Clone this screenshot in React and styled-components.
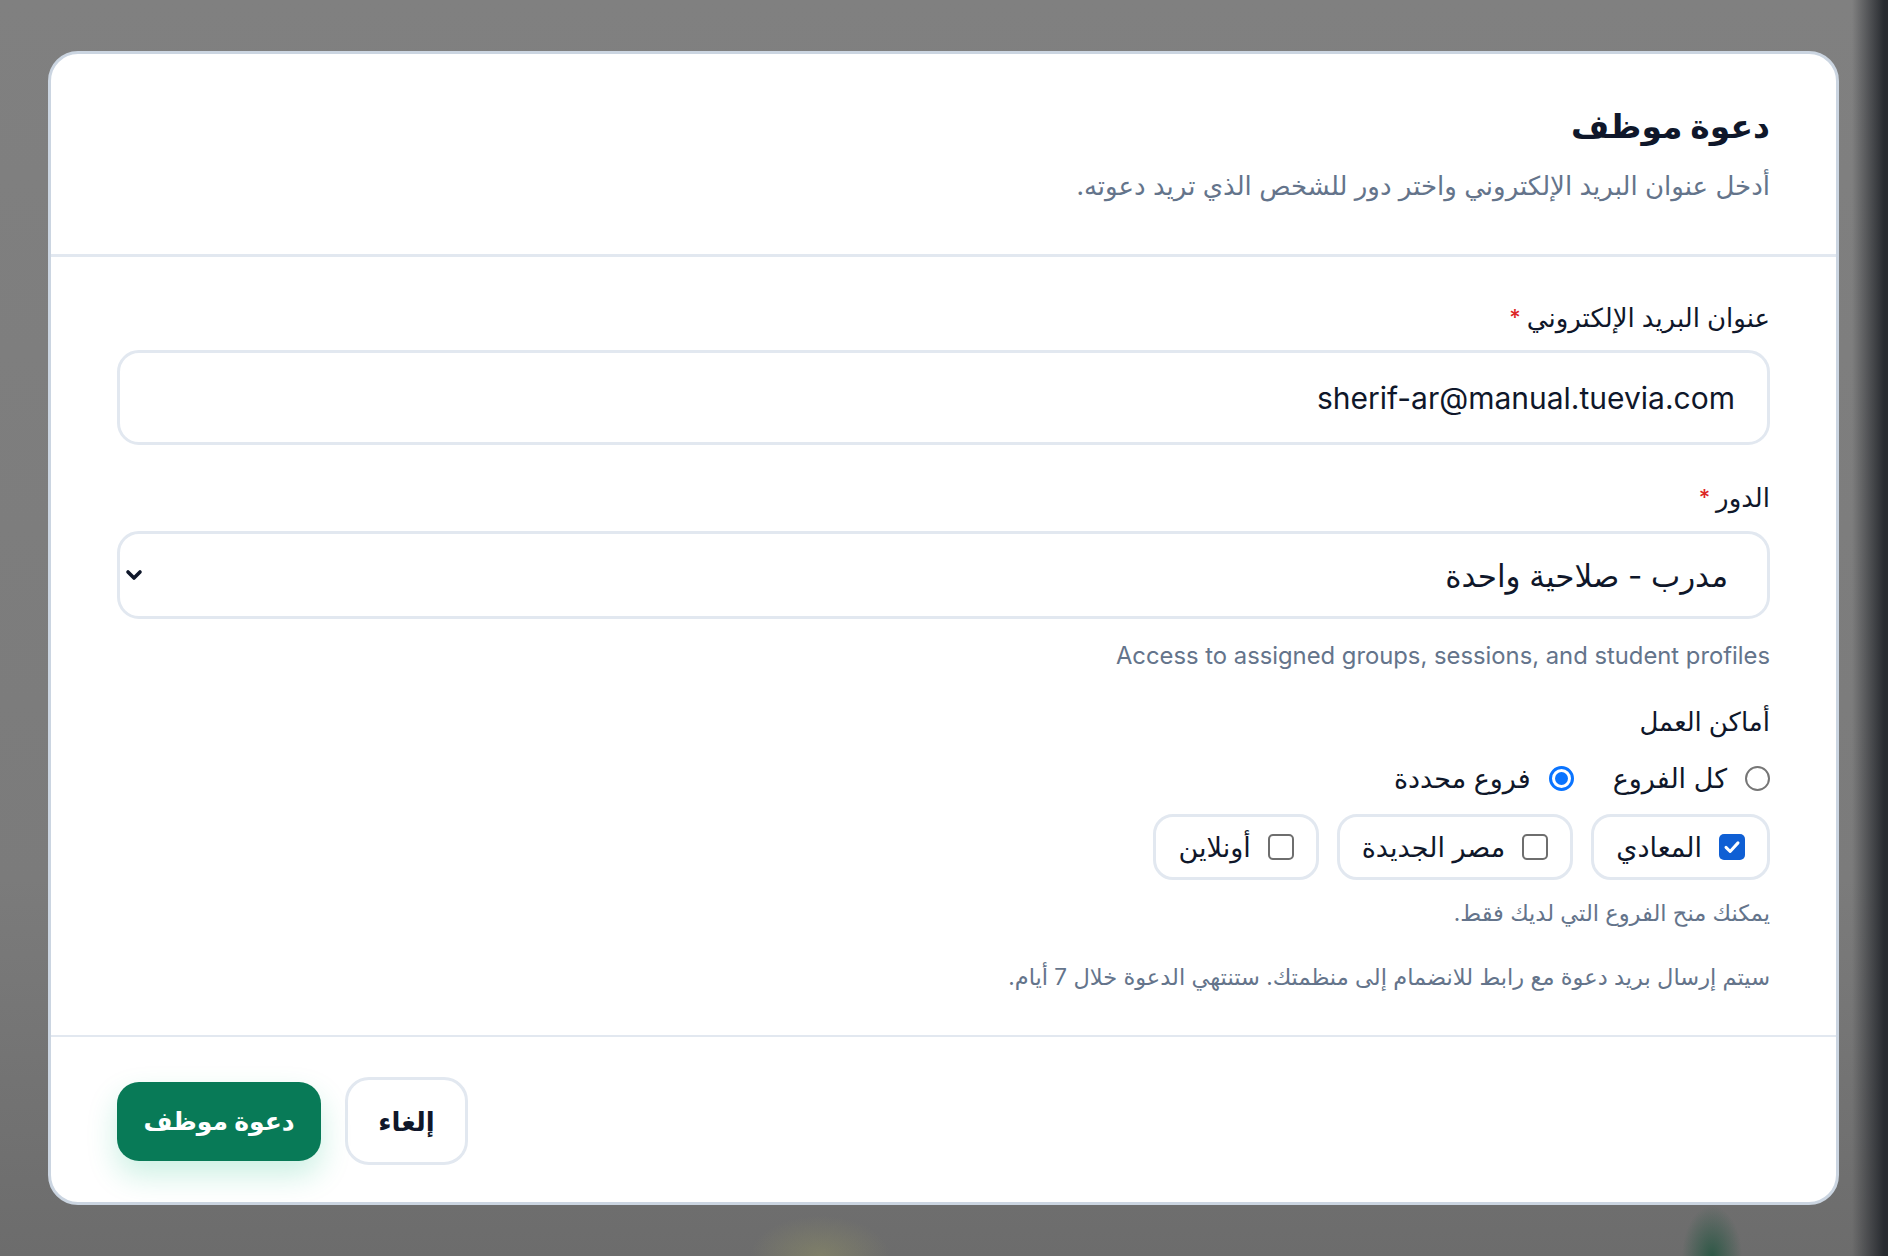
import React, { useState } from "react";
import styled, { createGlobalStyle } from "styled-components";
import { ChevronDown } from "lucide-react";

const GlobalStyle = createGlobalStyle`
html, body {
    margin: 0;
    padding: 0;
}
body {
    font-family: Inter, "Noto Sans", "DejaVu Sans", sans-serif;
    background: #7c7c7c;
}
* {
    box-sizing: border-box;
}
`;

const Backdrop = styled.div`
min-height: 1256px;
padding: 51px 0 0 48px;
background:
    linear-gradient(to right, rgba(40, 43, 48, 0) 1852px, rgba(40, 43, 48, 1) 1884px),
    radial-gradient(ellipse 70px 40px at 820px 1256px, rgba(150, 150, 100, 0.45), rgba(150, 150, 100, 0)),
    radial-gradient(ellipse 30px 50px at 1712px 1256px, rgba(20, 80, 55, 0.7), rgba(20, 80, 55, 0)),
    linear-gradient(to bottom, #808080 0%, #7b7b7b 70%, #6c6c6c 100%);
`;

const Modal = styled.div`
direction: rtl;
width: 1791px;
height: 1154px;
background: #ffffff;
border: 3px solid #cbd5e1;
border-radius: 30px;
display: flex;
flex-direction: column;
`;

const Header = styled.div`
padding: 47px 66px 50px;
border-bottom: 3px solid #e2e8f0;
`;

const Title = styled.h2`
margin: 0;
font-size: 33px;
line-height: 50px;
font-weight: 700;
color: #0f172a;
`;

const Subtitle = styled.p`
margin: 17px 0 0;
font-size: 26px;
line-height: 36px;
color: #64748b;
`;

const Body = styled.div`
flex: 1;
padding: 41px 66px 0;
display: flex;
flex-direction: column;
`;

const Label = styled.label`
display: block;
margin-top: ${props => props.$top || 0}px;
font-size: 26px;
line-height: 39px;
font-weight: 500;
color: #0f172a;
`;

const Required = styled.span`
color: #dc2626;
margin-right: 6px;
font-size: 22px;
vertical-align: top;
`;

const TextInput = styled.input`
margin-top: 13px;
width: 100%;
height: 95px;
border: 3px solid #e2e8f0;
border-radius: 22px;
padding: 0 32px;
font-family: inherit;
font-size: 30px;
color: #0f172a;
background: #ffffff;
outline: none;
direction: rtl;
`;

const SelectBox = styled.button`
margin-top: 14px;
width: 100%;
height: 88px;
border: 3px solid #e2e8f0;
border-radius: 22px;
padding: 0 39px 0 2px;
background: #ffffff;
display: flex;
align-items: center;
justify-content: space-between;
font-family: inherit;
font-size: 31px;
color: #0f172a;
cursor: pointer;
`;

const Hint = styled.p`
margin: ${props => props.$top || 0}px 0 0;
font-size: ${props => props.$size || 22.5}px;
line-height: 34px;
color: #64748b;
`;

const RadioRow = styled.div`
margin-top: 18px;
display: flex;
align-items: center;
gap: 39px;
`;

const RadioOption = styled.label`
display: flex;
align-items: center;
gap: 18px;
font-size: 27px;
line-height: 39px;
color: #0f172a;
cursor: pointer;
`;

const RadioDot = styled.span`
width: 25px;
height: 25px;
border-radius: 50%;
border: ${props => props.$checked ? "3px solid #0a74ff" : "2px solid #767676"};
display: flex;
align-items: center;
justify-content: center;
&::after {
    content: "";
    width: 13px;
    height: 13px;
    border-radius: 50%;
    background: ${props => props.$checked ? "#0a74ff" : "transparent"};
}
`;

const ChipRow = styled.div`
margin-top: 16px;
display: flex;
gap: 18px;
`;

const Chip = styled.label`
height: 66px;
display: flex;
align-items: center;
gap: 17px;
padding: 0 22px;
border: 3px solid #e2e8f0;
border-radius: 20px;
font-size: 27px;
color: #0f172a;
cursor: pointer;
`;

const CheckBox = styled.span`
width: 26px;
height: 26px;
border-radius: 5px;
border: ${props => props.$checked ? "none" : "2.5px solid #6e6e6e"};
background: ${props => props.$checked ? "#0f5fd4" : "#ffffff"};
display: flex;
align-items: center;
justify-content: center;
`;

const Footer = styled.div`
border-top: 2px solid #e2e8f0;
padding: 40px 66px 37px;
display: flex;
justify-content: flex-end;
align-items: center;
gap: 24px;
`;

const CancelButton = styled.button`
width: 123px;
height: 88px;
border: 3px solid #e2e8f0;
border-radius: 24px;
background: #ffffff;
font-family: inherit;
font-size: 26px;
font-weight: 600;
color: #0f172a;
cursor: pointer;
`;

const PrimaryButton = styled.button`
width: 204px;
height: 79px;
border: none;
border-radius: 22px;
background: #087a57;
box-shadow: 0 14px 30px rgba(16, 185, 129, 0.22);
font-family: inherit;
font-size: 25px;
font-weight: 600;
color: #ffffff;
cursor: pointer;
`;

const branchList = [
    { key: "maadi", name: "المعادي" },
    { key: "newcairo", name: "مصر الجديدة" },
    { key: "online", name: "أونلاين" },
];

const App = () => {
    const [scope, setScope] = useState("selected");
    const [branches, setBranches] = useState(["maadi"]);

    const toggleBranch = (key) => {
        setBranches(branches.includes(key) ? branches.filter(x => x !== key) : [...branches, key]);
    };

    return (
        <>
            <GlobalStyle />
            <Backdrop>
                <Modal>
                    <Header>
                        <Title>دعوة موظف</Title>
                        <Subtitle>أدخل عنوان البريد الإلكتروني واختر دور للشخص الذي تريد دعوته.</Subtitle>
                    </Header>
                    <Body>
                        <Label>عنوان البريد الإلكتروني<Required>*</Required></Label>
                        <TextInput defaultValue="sherif-ar@manual.tuevia.com" />

                        <Label $top={33}>الدور<Required>*</Required></Label>
                        <SelectBox type="button">
                            <span>مدرب - صلاحية واحدة</span>
                            <ChevronDown size={24} strokeWidth={3.6} color="#0f172a" />
                        </SelectBox>
                        <Hint $top={20} $size={23.8}>Access to assigned groups, sessions, and student profiles</Hint>

                        <Label $top={29}>أماكن العمل</Label>
                        <RadioRow>
                            <RadioOption onClick={() => setScope("all")}>
                                <RadioDot $checked={scope === "all"} />
                                كل الفروع
                            </RadioOption>
                            <RadioOption onClick={() => setScope("selected")}>
                                <RadioDot $checked={scope === "selected"} />
                                فروع محددة
                            </RadioOption>
                        </RadioRow>
                        <ChipRow>
                            {branchList.map(b => (
                                <Chip key={b.key} onClick={() => toggleBranch(b.key)}>
                                    <CheckBox $checked={branches.includes(b.key)}>
                                        {branches.includes(b.key)
                                            ? (<svg width="18" height="18" viewBox="0 0 24 24" fill="none">
                                                <path d="M4 12.5L9.5 18L20 6.5" stroke="#ffffff" strokeWidth="4" strokeLinecap="round" strokeLinejoin="round" />
                                            </svg>)
                                            : null}
                                    </CheckBox>
                                    {b.name}
                                </Chip>
                            ))}
                        </ChipRow>
                        <Hint $top={16}>يمكنك منح الفروع التي لديك فقط.</Hint>
                        <Hint $top={30}>سيتم إرسال بريد دعوة مع رابط للانضمام إلى منظمتك. ستنتهي الدعوة خلال 7 أيام.</Hint>
                    </Body>
                    <Footer>
                        <CancelButton type="button">إلغاء</CancelButton>
                        <PrimaryButton type="button">دعوة موظف</PrimaryButton>
                    </Footer>
                </Modal>
            </Backdrop>
        </>
    );
};

export default App;
